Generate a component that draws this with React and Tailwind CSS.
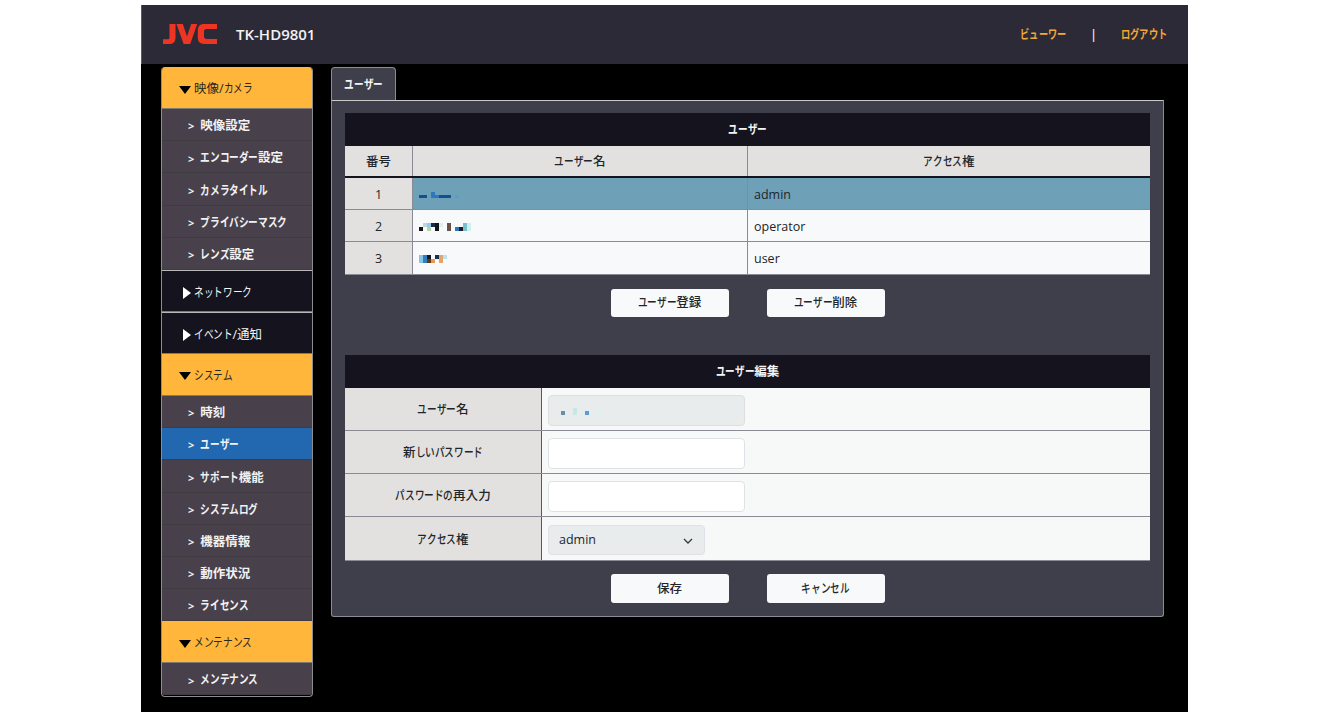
import React from "react";

const Mosaic = ({ w, h, cells }) => (
  <svg width={w} height={h} viewBox={`0 0 ${w} ${h}`} shapeRendering="crispEdges" className="block">
    {cells.map(([x, y, cw, ch, c], i) => (
      <rect key={i} x={x} y={y} width={cw} height={ch} fill={c} />
    ))}
  </svg>
);

const T = ({ s }) =>
  Array.from(s).map((ch, i) =>
    /[\u3040-\u30FF]/.test(ch) ? (
      <span key={i} className="inline-block w-[0.77em] origin-left scale-x-[0.77]">{ch}</span>
    ) : (
      <span key={i}>{ch}</span>
    )
  );

const m1 = [[0,3,8,3,"#14508f"],[12,0,4,6,"#2d78b8"],[16,3,4,3,"#2d78b8"],[20,3,12,3,"#14508f"],[36,3,4,3,"#5f9cc4"]];
const m2 = [[0,4,4,4,"#1d1410"],[4,0,4,4,"#b5dcd8"],[8,0,4,4,"#9ac8e8"],[8,4,4,4,"#b5d4a8"],[12,0,4,4,"#1a2a4a"],[16,0,4,8,"#151515"],[20,0,4,4,"#e0eef0"],[28,0,4,8,"#6a5048"],[36,4,4,4,"#2a78b8"],[40,4,4,4,"#1a1a30"],[44,0,4,8,"#7cc0d0"],[48,0,4,8,"#cff0f0"]];
const m3 = [[0,0,4,8,"#8cc4e4"],[4,0,4,8,"#2f80c0"],[8,0,4,4,"#141820"],[8,4,4,4,"#683810"],[12,4,4,4,"#e89850"],[16,0,4,4,"#1a3050"],[20,0,4,8,"#e8a468"],[24,0,4,4,"#b8e4f0"]];
const m4 = [[0,3,4,4,"#6a90a8"],[12,0,4,7,"#c8e8e4"],[24,3,4,4,"#5c9cd0"],[36,3,4,4,"#dcf0ec"]];

const Header = ({ label, open }) => (
  <div className={`h-[42px] flex items-center pt-[4px] border-b border-[#807a70] ${open ? "bg-[#ffb63b] text-[#2a2620] pl-[17px] gap-[3px]" : "bg-[#15141e] text-[#f4f4f4] pl-[21px] gap-[3px] border-t border-t-[#b8b8b8]"} text-[12.5px]`}>
    {open ? (
      <svg width="12" height="8" viewBox="0 0 12 8"><path d="M0 0H12L6 8Z" fill="#000" /></svg>
    ) : (
      <svg width="8" height="12" viewBox="0 0 8 12"><path d="M0 0V12L8 6Z" fill="#fff" /></svg>
    )}
    <span><T s={label} /></span>
  </div>
);

const Item = ({ label, active }) => (
  <div className={`h-[32.2px] flex items-center pt-[4px] pl-[26px] gap-[6px] text-[12.5px] font-bold text-[#f2f2f2] border-b border-[#403b40] ${active ? "bg-[#2168b0]" : "bg-[#48404a]"}`}>
    <span className="text-[11px]">&gt;</span>
    <span><T s={label} /></span>
  </div>
);

const Btn = ({ label, h = "h-[29px]" }) => (
  <button className={`w-[118px] ${h} pt-[2px] bg-[#f8f9fa] rounded-[3px] text-[12.5px] font-medium text-[#212529] flex items-center justify-center`}><span><T s={label} /></span></button>
);

const Cell = ({ children, className = "" }) => (
  <div className={`flex items-center justify-center pt-[3px] text-[12.5px] text-[#212529] ${className}`}><span>{typeof children === "string" ? <T s={children} /> : children}</span></div>
);

const Row = ({ n, bg, mosaic, access }) => (
  <div className="grid grid-cols-[68px_335px_1fr] h-[32.2px] border-b border-[#8a8a94]">
    <Cell className="bg-[#e3e1df] border-r border-[#8a8a94] font-medium">{n}</Cell>
    <div className={`${bg} border-r border-[#8a8a94] flex items-center pl-[6px] pt-[2px]`}>{mosaic}</div>
    <div className={`${bg} flex items-center pl-[6px] pt-[3px] text-[12.5px] font-medium text-[#212529]`}>{access}</div>
  </div>
);

const FormRow = ({ label, children, h }) => (
  <div className={`grid grid-cols-[197px_1fr] ${h} border-b border-[#8a8a94]`}>
    <Cell className="bg-[#e3e1df] border-r border-[#56565f] font-medium">{label}</Cell>
    <div className="bg-[#f7f9f8] flex items-center pl-[6px] pt-[2px]">{children}</div>
  </div>
);

const Title = ({ label, className = "" }) => (
  <div className={`bg-[#15141e] pt-[2px] text-[#f4f4f4] text-[12.5px] font-bold flex items-center justify-center ${className}`}><span><T s={label} /></span></div>
);

export default function App() {
  return (
    <div className="w-[1328px] h-[717px] bg-white pt-[5px] pl-[141px] overflow-hidden" style={{ fontFamily: '"Open Sans","Noto Sans CJK JP",sans-serif' }}>
      <div className="w-[1047px] h-[707px] bg-black">
        <header className="h-[59px] bg-[#2c2a37] flex items-center pl-[21px] pr-[21px] border-l border-[#5a5a60]">
          <svg width="54" height="20" viewBox="0 0 54 20" className="mr-[19px] -mt-[1px]">
            <path d="M6.500 0h6v13.500c0 4.200-2 6.500-6 6.500H0v-4.800h4.600c1.400 0 1.900-.6 1.900-2Z" fill="#ee3524" />
            <path d="M13.500 0h6.300l4.200 12.500L28.200 0h6l-7 20h-6.600Z" fill="#ee3524" />
            <path d="M54 5H43.800c-2 0-2.800.9-2.800 2.700v4.600c0 1.800.8 2.700 2.800 2.700H54v5H41.500c-4.600 0-6.700-2-6.700-6.400V6.400C34.800 2 36.900 0 41.500 0H54Z" fill="#ee3524" />
          </svg>
          <span className="text-[15px] font-semibold text-[#f2f2f2]">TK-HD9801</span>
          <div className="ml-auto flex items-center text-[12px] font-semibold text-[#f5a830]">
            <span><T s="ビューワー" /></span>
            <span className="mx-[24px] text-[#e8eef5]">|</span>
            <span><T s="ログアウト" /></span>
          </div>
        </header>
        <div className="flex pt-[3px] pl-[20px]">
          <nav className="w-[152px] rounded-[4px] overflow-hidden border-x border-b border-[#8c8c90] h-[630px]">
            <Header label="映像/カメラ" open />
            <Item label="映像設定" />
            <Item label="エンコーダー設定" />
            <Item label="カメラタイトル" />
            <Item label="プライバシーマスク" />
            <Item label="レンズ設定" />
            <Header label="ネットワーク" />
            <Header label="イベント/通知" />
            <Header label="システム" open />
            <Item label="時刻" />
            <Item label="ユーザー" active />
            <Item label="サポート機能" />
            <Item label="システムログ" />
            <Item label="機器情報" />
            <Item label="動作状況" />
            <Item label="ライセンス" />
            <Header label="メンテナンス" open />
            <Item label="メンテナンス" />
          </nav>
          <main className="ml-[18px] w-[833px]">
            <div className="w-[65px] h-[33px] pt-[2px] bg-[#3f3f4c] border border-b-0 border-[#8c8c95] rounded-t-[4px] flex items-center justify-center text-[12.5px] font-bold text-[#f4f4f4]"><span><T s="ユーザー" /></span></div>
            <section className="h-[517px] bg-[#3f3f4c] border border-[#8c8c95] border-t-[#c8c8c8] rounded-b-[3px] pt-[12px] px-[13px]">
              <Title label="ユーザー" className="h-[32.5px]" />
              <div className="grid grid-cols-[68px_335px_1fr] h-[32.5px] border-b-2 border-[#15141e]">
                <Cell className="bg-[#e3e1df] border-r border-[#8a8a94] font-medium">番号</Cell>
                <Cell className="bg-[#e3e1df] border-r border-[#8a8a94] font-medium">ユーザー名</Cell>
                <Cell className="bg-[#e3e1df] font-medium">アクセス権</Cell>
              </div>
              <Row n="1" bg="bg-[#6ea0b8]" mosaic={<Mosaic w={40} h={6} cells={m1} />} access="admin" />
              <Row n="2" bg="bg-[#f8f9fa]" mosaic={<Mosaic w={52} h={8} cells={m2} />} access="operator" />
              <Row n="3" bg="bg-[#f8f9fa]" mosaic={<Mosaic w={28} h={8} cells={m3} />} access="user" />
              <div className="flex justify-center gap-[38px] mt-[14px]">
                <Btn label="ユーザー登録" h="h-[28.5px]" />
                <Btn label="ユーザー削除" h="h-[28.5px]" />
              </div>
              <Title label="ユーザー編集" className="h-[33px] mt-[38px]" />
              <FormRow label="ユーザー名" h="h-[43px]">
                <div className="w-[197px] h-[31px] bg-[#e9ecec] border border-[#dcdfe0] rounded-[4px] flex items-center pl-[12px] pt-[2px]">
                  <Mosaic w={40} h={7} cells={m4} />
                </div>
              </FormRow>
              <FormRow label="新しいパスワード" h="h-[43px]">
                <input className="w-[197px] h-[31px] bg-white border border-[#dee2e6] rounded-[4px]" />
              </FormRow>
              <FormRow label="パスワードの再入力" h="h-[43px]">
                <input className="w-[197px] h-[31px] bg-white border border-[#dee2e6] rounded-[4px]" />
              </FormRow>
              <FormRow label="アクセス権" h="h-[44px]">
                <div className="w-[157px] h-[30px] pt-[2px] bg-[#e9ecec] border border-[#dee2e6] rounded-[4px] flex items-center justify-between pl-[10px] pr-[11px] text-[12.5px] font-medium text-[#212529]">
                  <span>admin</span>
                  <svg width="10" height="6" viewBox="0 0 10 6" fill="none"><path d="M1 1l4 4 4-4" stroke="#343a40" strokeWidth="1.3" /></svg>
                </div>
              </FormRow>
              <div className="flex justify-center gap-[38px] mt-[13px]">
                <Btn label="保存" />
                <Btn label="キャンセル" />
              </div>
            </section>
          </main>
        </div>
      </div>
    </div>
  );
}
